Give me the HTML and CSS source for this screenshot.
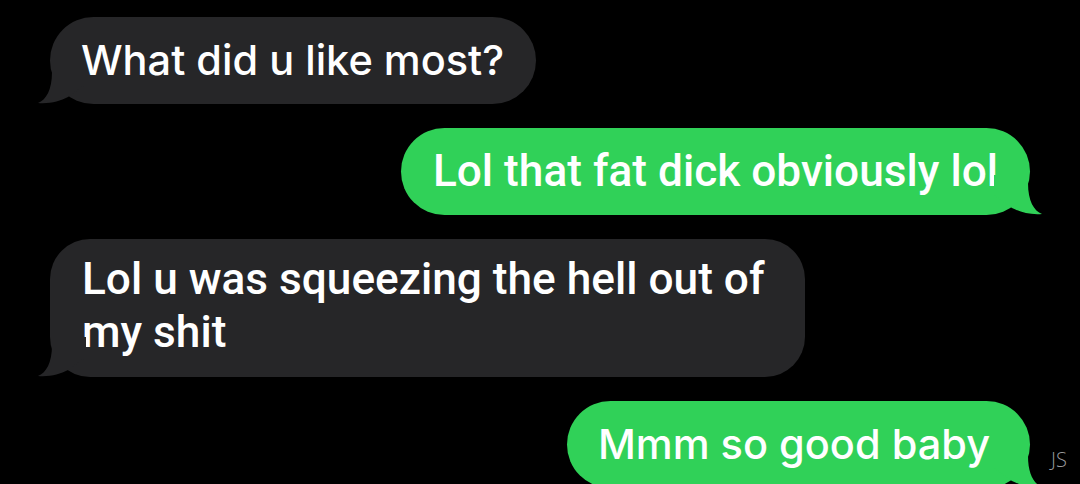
FILE: index.html
```html
<!DOCTYPE html>
<html>
<head>
<meta charset="utf-8">
<link rel="stylesheet" href="styles.css">
</head>
<body>
<div class="thread">
  <div class="row in">
    <div class="bubble gray wide">What did u like most?
      <svg class="tail" viewBox="0 0 50 40" width="50" height="40"><path d="M16,0 L16,8 C16,26 10,36 2,39 C14,40 24,37 32,33 L36,30 L50,20 L50,0 Z"/></svg>
    </div>
  </div>
  <div class="row out">
    <div class="bubble green narrow">Lol that fat dick obviously lol
      <svg class="tail" viewBox="0 0 50 40" width="50" height="40"><path d="M16,0 L16,8 C16,26 10,36 2,39 C14,40 24,37 32,33 L36,30 L50,20 L50,0 Z"/></svg>
    </div>
  </div>
  <div class="row in">
    <div class="bubble gray narrow multi">Lol u was squeezing the hell out of<br>my shit
      <svg class="tail" viewBox="0 0 50 40" width="50" height="40"><path d="M16,0 L16,8 C16,26 10,36 2,39 C14,40 24,37 32,33 L36,30 L50,20 L50,0 Z"/></svg>
    </div>
  </div>
  <div class="row out">
    <div class="bubble green wide last">Mmm so good baby
      <svg class="tail" viewBox="0 0 50 40" width="50" height="40"><path d="M16,0 L16,8 C16,26 10,36 2,39 C14,40 24,37 32,33 L36,30 L50,20 L50,0 Z"/></svg>
    </div>
  </div>
</div>
<div class="mark">JS</div>
</body>
</html>
```

FILE: styles.css
```css
html, body {
  margin: 0;
  padding: 0;
  background: #000;
  width: 1080px;
  height: 484px;
  overflow: hidden;
}
.thread {
  display: flex;
  flex-direction: column;
  gap: 24px;
  padding: 17px 50px 0 50px;
}
.row {
  display: flex;
}
.row.in { justify-content: flex-start; }
.row.out { justify-content: flex-end; }
.bubble {
  position: relative;
  color: #fff;
  box-sizing: border-box;
  height: 87px;
  display: flex;
  align-items: center;
  padding: 0 32px 2px 31px;
  border-radius: 44px;
  white-space: nowrap;
}
.bubble.gray { background: #262628; }
.bubble.green { background: #30d158; }
.bubble.gray .tail { fill: #262628; }
.bubble.green .tail { fill: #30d158; }
.wide {
  font-family: Inter, "Noto Sans", sans-serif;
  font-weight: 500;
  font-size: 41.5px;
}
.last { padding-right: 40px; }
.narrow {
  font-family: Roboto, "Liberation Sans", sans-serif;
  font-weight: 500;
  font-size: 44.2px;
  padding-left: 32px;
}
.multi {
  height: 138px;
  line-height: 53px;
  border-radius: 40px;
  white-space: normal;
  padding-bottom: 4px;
  padding-right: 40px;
}
.tail {
  position: absolute;
  bottom: 0;
  width: 50px;
  height: 40px;
}
.in .tail { left: -14px; }
.out .tail { right: -14px; transform: scaleX(-1); }
.mark {
  position: absolute;
  left: 1051px;
  top: 448px;
  color: #9a9a9e;
  font-family: "Open Sans", sans-serif;
  font-weight: 300;
  font-size: 20px;
  line-height: 24px;
}
```
